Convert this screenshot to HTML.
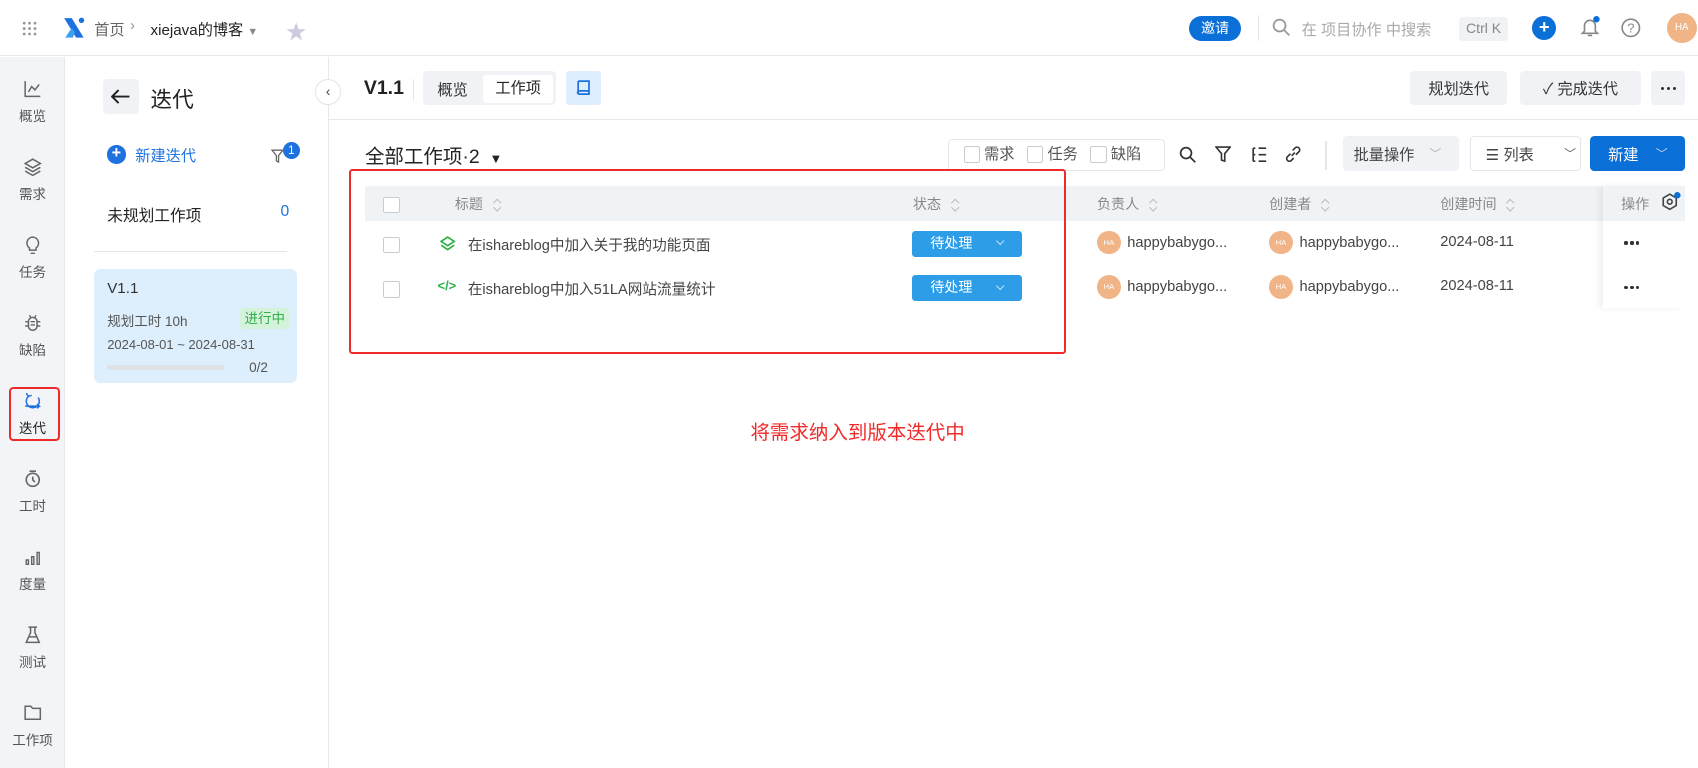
<!DOCTYPE html>
<html><head><meta charset="utf-8"><style>
*{box-sizing:border-box;margin:0;padding:0}
html,body{width:1698px;height:768px;overflow:hidden;background:#fff}
body{font-family:"Liberation Sans","Noto Sans CJK SC",sans-serif;color:#333;font-size:14px}
#w{position:relative;width:1568px;height:709px;zoom:1.08291}
.a{position:absolute}
.nav{left:0;top:53px;width:60px;height:656px;background:#f2f4f7;border-right:1px solid #e8e8e8}
.ni{position:absolute;left:0;width:60px;text-align:center;font-size:12.5px;color:#555}
.ni svg{display:block;margin:0 auto 6px}
.btn{position:absolute;background:#f0f2f5;border-radius:4px;font-size:14px;color:#333;display:flex;align-items:center;justify-content:center}
.cb{display:inline-block;width:15px;height:15px;border:1px solid #c8cbd0;border-radius:2px;background:#fff;vertical-align:middle}
.th{position:absolute;top:179px;font-size:13px;color:#888}
.av{display:inline-block;width:22px;height:22px;border-radius:50%;background:#f0b486;color:#fff;font-size:7px;text-align:center;line-height:22px;vertical-align:middle;margin-right:6px}
.td{position:absolute;font-size:13.5px;color:#444}
.st{position:absolute;left:842px;width:102px;height:24px;background:#2e9de8;border-radius:3px;color:#fff;font-size:13px;line-height:24px;padding-left:17px}
.st:after{content:"";position:absolute;right:17px;top:7px;width:5px;height:5px;border-right:1.5px solid #cfe8fb;border-bottom:1.5px solid #cfe8fb;transform:rotate(45deg)}
.sort{display:inline-block;width:8px;height:14px;margin-left:9px;vertical-align:middle;position:relative}
.sort:before,.sort:after{content:"";position:absolute;left:1px;width:5px;height:5px;border-left:1.2px solid #bbb;border-top:1.2px solid #bbb}
.sort:before{top:2px;transform:rotate(45deg)}
.sort:after{top:6px;transform:rotate(225deg)}
.dots{position:absolute;left:1500px;display:flex;gap:2.5px}
.dots i{display:block;width:3px;height:3px;background:#333;border-radius:50%}
</style></head><body><div id="w">
<div class="a" style="left:0;top:0;width:1568px;height:52px;border-bottom:1px solid #e6e8eb"></div>
<svg class="a" style="left:20px;top:19px" width="14" height="14"><g fill="#999"><circle cx="2" cy="2" r="1.3"/><circle cx="7" cy="2" r="1.3"/><circle cx="12" cy="2" r="1.3"/><circle cx="2" cy="7" r="1.3"/><circle cx="7" cy="7" r="1.3"/><circle cx="12" cy="7" r="1.3"/><circle cx="2" cy="12" r="1.3"/><circle cx="7" cy="12" r="1.3"/><circle cx="12" cy="12" r="1.3"/></g></svg>
<svg class="a" style="left:57px;top:15px" width="22" height="22"><path d="M2 2 L9 2 L20 20 L13 20 Z" fill="#1d72e0"/><path d="M3 20 L9 11 L12 15 L10 20Z" fill="#3aa0f0"/><circle cx="18" cy="4" r="2.5" fill="#1d72e0"/></svg>
<div class="a" style="left:87px;top:17px;font-size:14px;color:#666">首页</div>
<div class="a" style="left:120px;top:16px;color:#999">›</div>
<div class="a" style="left:139px;top:17px;font-size:14px;color:#222">xiejava的博客 <span style="color:#888;font-size:10px">▼</span></div>
<div class="a" style="left:264px;top:14px;font-size:19px;color:#ccd">★</div>
<div class="a" style="left:1098px;top:15px;width:48px;height:23px;border-radius:12px;background:#0b6fd8;color:#fff;font-size:13px;text-align:center;line-height:23px">邀请</div>
<div class="a" style="left:1162px;top:14px;width:1px;height:24px;background:#e5e5e5"></div>
<svg class="a" style="left:1175px;top:17px" width="18" height="18"><circle cx="7" cy="7" r="5.5" fill="none" stroke="#999" stroke-width="1.6"/><path d="M11 11 L16 16" stroke="#999" stroke-width="1.6"/></svg>
<div class="a" style="left:1202px;top:17px;font-size:14px;color:#aaa">在 项目协作 中搜索</div>
<div class="a" style="left:1347px;top:16px;width:46px;height:22px;background:#f0f2f5;border-radius:3px;color:#888;font-size:13px;text-align:center;line-height:22px">Ctrl K</div>
<div class="a" style="left:1415px;top:15px;width:22px;height:22px;border-radius:50%;background:#0b6fd8;color:#fff;text-align:center;line-height:21px;font-size:17px;font-weight:bold">+</div>
<svg class="a" style="left:1457px;top:15px" width="22" height="22"><path d="M4 16 L6 14 L6 9 A5 5 0 0 1 16 9 L16 14 L18 16 Z M9 18 L13 18" fill="none" stroke="#888" stroke-width="1.5"/><circle cx="17" cy="3" r="3" fill="#0b6fd8"/></svg>
<svg class="a" style="left:1496px;top:16px" width="20" height="20"><circle cx="10" cy="10" r="8" fill="none" stroke="#888" stroke-width="1.5"/><text x="10" y="14.5" font-size="12" text-anchor="middle" fill="#888" font-family="Liberation Sans">?</text></svg>
<div class="a" style="left:1539px;top:12px;width:28px;height:28px;border-radius:50%;background:#f0b486;color:#fff;font-size:9px;text-align:center;line-height:28px">HA</div>
<div class="a nav"></div>
<div class="ni" style="top:73px"><svg width="18" height="18"><path d="M2 2 V16 H16 M5 12 L8 7 L11 10 L15 5" fill="none" stroke="#666" stroke-width="1.4"/></svg>概览</div>
<div class="ni" style="top:145px"><svg width="18" height="18"><path d="M9 2 L16 6 L9 10 L2 6Z M2 9.5 L9 13.5 L16 9.5 M2 13 L9 17 L16 13" fill="none" stroke="#666" stroke-width="1.4"/></svg>需求</div>
<div class="ni" style="top:217px"><svg width="18" height="18"><path d="M9 2 A5.5 5.5 0 0 1 12 12 V14 H6 V12 A5.5 5.5 0 0 1 9 2Z M7 17 H11" fill="none" stroke="#666" stroke-width="1.4"/></svg>任务</div>
<div class="ni" style="top:289px"><svg width="18" height="18"><rect x="5" y="4" width="8" height="12" rx="4" fill="none" stroke="#666" stroke-width="1.4"/><path d="M2 8 H5 M13 8 H16 M2 12 H5 M13 12 H16 M7 8 H11 M7 11 H11 M6 2 L7 4 M12 2 L11 4" stroke="#666" stroke-width="1.3"/></svg>缺陷</div>
<div class="a" style="left:8px;top:357px;width:47px;height:50px;border:2px solid #f02a2a;border-radius:4px"></div>
<div class="ni" style="top:361px;color:#222"><svg width="18" height="18"><path d="M5 5 A6 6 0 1 0 14 6 M5 5 L3 2 M5 5 L8 4 M2 14 H15 L13 12 M15 14 L13 16" fill="none" stroke="#1d72e0" stroke-width="1.4"/></svg>迭代</div>
<div class="ni" style="top:433px"><svg width="18" height="18"><circle cx="9" cy="10" r="6" fill="none" stroke="#666" stroke-width="1.5"/><path d="M6 2 H12 M9 7 V10 L11 12" stroke="#666" stroke-width="1.5" fill="none"/></svg>工时</div>
<div class="ni" style="top:505px"><svg width="18" height="18"><path d="M3 12 H5 V16 H3Z M8 9 H10 V16 H8Z M13 5 H15 V16 H13Z" fill="none" stroke="#666" stroke-width="1.3"/></svg>度量</div>
<div class="ni" style="top:577px"><svg width="18" height="18"><path d="M5 2 H13 M7 2 V7 L3 16 H15 L11 7 V2 M5 11 H13" fill="none" stroke="#666" stroke-width="1.4"/></svg>测试</div>
<div class="ni" style="top:649px"><svg width="18" height="18"><path d="M2 3 H7 L9 5 H16 V15 H2Z" fill="none" stroke="#666" stroke-width="1.4"/></svg>工作项</div>
<div class="a" style="left:303px;top:53px;width:1px;height:656px;background:#e8e8e8"></div>
<div class="btn" style="left:95px;top:73px;width:33px;height:32px"><svg width="18" height="14"><path d="M17 7 H2 M7 1 L1 7 L7 13" fill="none" stroke="#222" stroke-width="1.8"/></svg></div>
<div class="a" style="left:139px;top:77px;font-size:20px;color:#222">迭代</div>
<div class="a" style="left:99px;top:134px;width:17px;height:17px;border-radius:50%;background:#1d72e0;color:#fff;text-align:center;line-height:16px;font-weight:bold;font-size:15px">+</div>
<div class="a" style="left:125px;top:133px;font-size:14px;color:#1d72e0">新建迭代</div>
<svg class="a" style="left:250px;top:137px" width="12" height="14"><path d="M1 2 H11 L7 7 V13 L5 12 V7Z" fill="none" stroke="#666" stroke-width="1.2"/></svg>
<div class="a" style="left:261px;top:131px;width:16px;height:16px;border-radius:50%;background:#1d72e0;color:#fff;font-size:11px;text-align:center;line-height:16px">1</div>
<div class="a" style="left:99px;top:187px;font-size:14.5px;color:#222">未规划工作项</div>
<div class="a" style="left:259px;top:187px;font-size:14.5px;color:#1d72e0">0</div>
<div class="a" style="left:87px;top:232px;width:178px;height:1px;background:#e6e6e6"></div>
<div class="a" style="left:87px;top:248px;width:187px;height:106px;background:#ddeefc;border-radius:6px"></div>
<div class="a" style="left:99px;top:259px;font-size:14px;color:#333">V1.1</div>
<div class="a" style="left:99px;top:286px;font-size:12.5px;color:#555">规划工时 10h</div>
<div class="a" style="left:222px;top:284px;width:45px;height:20px;background:#d5f2db;border-radius:3px;color:#2fb14b;font-size:12.5px;text-align:center;line-height:20px">进行中</div>
<div class="a" style="left:99px;top:311px;font-size:12px;color:#555">2024-08-01 ~ 2024-08-31</div>
<div class="a" style="left:99px;top:337px;width:108px;height:5px;background:#dfe3e8"></div>
<div class="a" style="left:230px;top:332px;font-size:12.5px;color:#555">0/2</div>
<div class="a" style="left:291px;top:73px;width:24px;height:24px;border-radius:50%;background:#fff;border:1px solid #e4e4e4;text-align:center;line-height:21px;color:#444;font-size:13px">‹</div>
<div class="a" style="left:336px;top:71px;font-size:18px;font-weight:bold;color:#222">V1.1</div>
<div class="a" style="left:381px;top:73px;width:1px;height:20px;background:#e5e5e5"></div>
<div class="a" style="left:391px;top:66px;width:122px;height:31px;background:#f0f2f5;border-radius:4px"></div>
<div class="a" style="left:404px;top:72px;font-size:14px;color:#333">概览</div>
<div class="a" style="left:446px;top:69px;width:65px;height:26px;background:#fff;border-radius:3px;font-size:14px;color:#222;text-align:center;line-height:26px">工作项</div>
<div class="a" style="left:523px;top:66px;width:32px;height:31px;background:#dfeeff;border-radius:3px"></div>
<svg class="a" style="left:532px;top:74px" width="14" height="16"><path d="M2 1 H12 V13 H3 A1.5 1.5 0 0 1 3 10 H12 M2 1 V12" fill="none" stroke="#1d72e0" stroke-width="1.6"/></svg>
<div class="btn" style="left:1302px;top:66px;width:90px;height:31px">规划迭代</div>
<div class="btn" style="left:1404px;top:66px;width:111px;height:31px">✓ 完成迭代</div>
<div class="btn" style="left:1525px;top:66px;width:31px;height:31px"><div class="dots" style="position:static"><i></i><i></i><i></i></div></div>
<div class="a" style="left:304px;top:110px;width:1264px;height:1px;background:#e8e8e8"></div>
<div class="a" style="left:337px;top:129px;font-size:18px;color:#222">全部工作项·2 <span style="font-size:12px;margin-left:4px">▼</span></div>
<div class="a" style="left:875px;top:128px;width:201px;height:30px;border:1px solid #e4e6ea;border-radius:4px;font-size:14px;color:#555;line-height:28px;padding-left:14px"><span class="cb"></span> 需求 &nbsp;&nbsp;<span class="cb"></span> 任务 &nbsp;&nbsp;<span class="cb"></span> 缺陷</div>
<svg class="a" style="left:1089px;top:135px" width="16" height="16"><circle cx="6.5" cy="6.5" r="5" fill="none" stroke="#333" stroke-width="1.6"/><path d="M10 10 L15 15" stroke="#333" stroke-width="1.6"/></svg>
<svg class="a" style="left:1122px;top:135px" width="15" height="16"><path d="M1 1 H14 L9 7 V14 L6 13 V7Z" fill="none" stroke="#333" stroke-width="1.5"/></svg>
<svg class="a" style="left:1155px;top:135px" width="15" height="16"><path d="M2 2 V14 M2 2 H4 M2 8 H4 M2 14 H4 M7 2 H14 M7 8 H14 M7 14 H14" stroke="#333" stroke-width="1.5"/></svg>
<svg class="a" style="left:1186px;top:134px" width="17" height="17"><path d="M7 10 L10 7 M6 8 L3 11 A2.5 2.5 0 0 0 6.5 14.5 L9 12 M11 9 L14 6 A2.5 2.5 0 0 0 10.5 2.5 L8 5" fill="none" stroke="#333" stroke-width="1.5"/></svg>
<div class="a" style="left:1224px;top:130px;width:1px;height:27px;background:#e5e5e5"></div>
<div class="btn" style="left:1240px;top:126px;width:107px;height:32px;justify-content:flex-start;padding-left:10px;color:#444">批量操作 <span style="color:#aaa;margin-left:14px;font-size:11px">﹀</span></div>
<div class="btn" style="left:1357px;top:126px;width:103px;height:32px;background:#fff;border:1px solid #e4e6ea;justify-content:flex-start;padding-left:14px;color:#444">☰ 列表 <span style="color:#555;margin-left:28px;font-size:11px">﹀</span></div>
<div class="btn" style="left:1468px;top:126px;width:88px;height:32px;background:#0b6fd8;color:#fff;justify-content:flex-start;padding-left:17px">新建 <span style="margin-left:16px;font-size:11px;color:#cde">﹀</span></div>
<div class="a" style="left:337px;top:172px;width:1219px;height:32px;background:#f0f3f6"></div>
<div class="a" style="left:354px;top:181px"><span class="cb"></span></div>
<div class="th" style="left:420px">标题<span class="sort"></span></div>
<div class="th" style="left:843px">状态<span class="sort"></span></div>
<div class="th" style="left:1013px">负责人<span class="sort"></span></div>
<div class="th" style="left:1172px">创建者<span class="sort"></span></div>
<div class="th" style="left:1330px">创建时间<span class="sort"></span></div>
<div class="a" style="left:1480px;top:172px;width:76px;height:112px;background:#fff;box-shadow:-4px 0 6px rgba(0,0,0,0.06)"></div>
<div class="a" style="left:1480px;top:172px;width:76px;height:32px;background:#f0f3f6"></div>
<div class="th" style="left:1497px">操作</div>
<svg class="a" style="left:1533px;top:177px" width="20" height="20"><path d="M9 2 L15 5.5 V12.5 L9 16 L3 12.5 V5.5Z" fill="none" stroke="#444" stroke-width="1.5"/><circle cx="9" cy="9" r="2.2" fill="none" stroke="#444" stroke-width="1.5"/><circle cx="16" cy="3" r="3" fill="#0b6fd8"/></svg>
<div class="a" style="left:354px;top:218px"><span class="cb"></span></div>
<svg class="a" style="left:405px;top:218px" width="16" height="14"><path d="M8 1 L14 5 L8 9 L2 5Z M2 8.5 L8 12.5 L14 8.5" fill="none" stroke="#2fb14b" stroke-width="1.6"/></svg>
<div class="td" style="left:432px;top:216px">在ishareblog中加入关于我的功能页面</div>
<div class="st" style="top:213px">待处理</div>
<div class="td" style="left:1013px;top:213px"><span class="av">HA</span>happybabygo...</div>
<div class="td" style="left:1172px;top:213px"><span class="av">HA</span>happybabygo...</div>
<div class="td" style="left:1330px;top:216px">2024-08-11</div>
<div class="dots" style="top:223px"><i></i><i></i><i></i></div>
<div class="a" style="left:354px;top:259px"><span class="cb"></span></div>
<div class="a" style="left:404px;top:257px;color:#2fb14b;font-size:12px;font-weight:bold">&lt;/&gt;</div>
<div class="td" style="left:432px;top:257px">在ishareblog中加入51LA网站流量统计</div>
<div class="st" style="top:254px">待处理</div>
<div class="td" style="left:1013px;top:254px"><span class="av">HA</span>happybabygo...</div>
<div class="td" style="left:1172px;top:254px"><span class="av">HA</span>happybabygo...</div>
<div class="td" style="left:1330px;top:257px">2024-08-11</div>
<div class="dots" style="top:264px"><i></i><i></i><i></i></div>
<div class="a" style="left:322px;top:156px;width:662px;height:171px;border:2px solid #f02a2a;border-radius:3px"></div>
<div class="a" style="left:693px;top:384px;font-size:18px;color:#f02a2a">将需求纳入到版本迭代中</div>
</div></body></html>
